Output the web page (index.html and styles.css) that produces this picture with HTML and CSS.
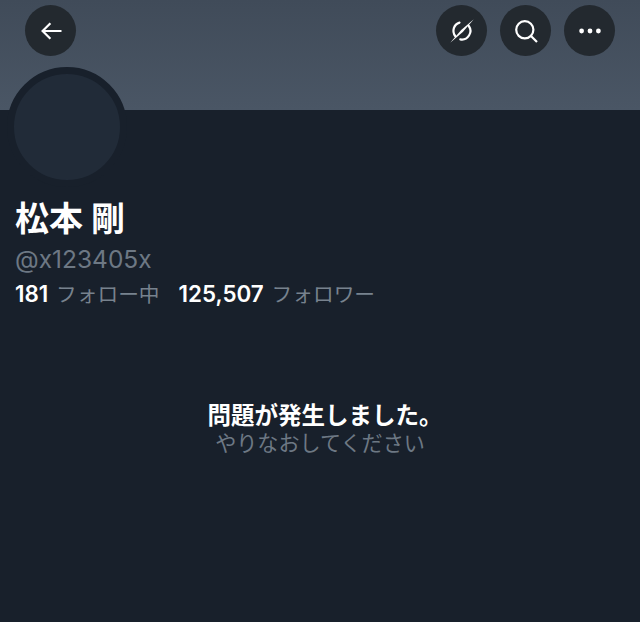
FILE: index.html
```html
<!DOCTYPE html>
<html lang="ja">
<head>
<meta charset="utf-8">
<title>松本 剛</title>
<link rel="stylesheet" href="styles.css">
</head>
<body>
<main class="profile">
  <header class="banner">
    <button class="round" aria-label="戻る">
      <svg viewBox="0 0 24 24" class="icon"><path d="M22.5 12H3.5M11.4 4.2 3.6 12l7.8 7.8" fill="none" stroke="#fff" stroke-width="2.2"/></svg>
    </button>
    <div class="actions">
      <button class="round" aria-label="非表示">
        <svg viewBox="0 0 24 24" class="icon"><path d="M9.5 3.6A8.6 8.6 0 0 0 5.2 17M10.3 20.4A8.6 8.6 0 0 0 18.8 7" fill="none" stroke="#fff" stroke-width="2.2" stroke-linecap="round"/><path d="M23.8.2 11.2 11 .2 23.8 12.8 13Z" fill="#fff"/></svg>
      </button>
      <button class="round" aria-label="検索">
        <svg viewBox="0 0 24 24" class="icon"><circle cx="10.8" cy="10.8" r="8.6" fill="none" stroke="#fff" stroke-width="2.2"/><path d="m17 17 6 6" fill="none" stroke="#fff" stroke-width="2.2"/></svg>
      </button>
      <button class="round" aria-label="その他">
        <svg viewBox="0 0 24 24" class="icon"><circle cx="3.6" cy="12" r="2.4" fill="#fff"/><circle cx="12" cy="12" r="2.4" fill="#fff"/><circle cx="20.4" cy="12" r="2.4" fill="#fff"/></svg>
      </button>
    </div>
  </header>
  <section class="info">
    <div class="avatar"></div>
    <h1 class="name">松本 剛</h1>
    <p class="handle">@x123405x</p>
    <p class="stats">
      <span class="stat"><b>181</b> フォロー中</span>
      <span class="stat"><b>125,507</b> フォロワー</span>
    </p>
  </section>
  <section class="error">
    <p class="error-title">問題が発生しました。</p>
    <p class="error-sub">やりなおしてください</p>
  </section>
</main>
</body>
</html>
```
FILE: styles.css
```css
* { box-sizing: border-box; }
html, body { margin: 0; height: 100%; }
body {
  background: #18202b;
  color: #fff;
  font-family: Inter, "Noto Sans CJK JP", sans-serif;
  overflow: hidden;
}
p, h1 { margin: 0; }
.profile { width: 640px; height: 622px; display: flex; flex-direction: column; }
.banner {
  height: 110px;
  flex: none;
  padding: 5px 25px 0;
  display: flex;
  justify-content: space-between;
  align-items: flex-start;
  background: linear-gradient(#404b59, #4a5665);
}
.actions { display: flex; gap: 13px; }
.round {
  width: 51px;
  height: 51px;
  padding: 0;
  border: 0;
  border-radius: 50%;
  background: #23292f;
  display: flex;
  align-items: center;
  justify-content: center;
}
.icon { width: 24px; height: 24px; display: block; }
.info { padding: 0 15px; }
.avatar {
  width: 120px;
  height: 120px;
  margin: -43px 0 0 -8px;
  border-radius: 50%;
  border: 7px solid #18202b;
  background: #212b38;
}
.name { margin-top: 10px; font-size: 34px; line-height: 44px; font-weight: 700; }
.handle { margin-top: 3px; font-size: 24.5px; line-height: 30px; color: #6d7884; }
.stats { margin-top: 6px; display: flex; gap: 19px; align-items: baseline; font-size: 20.7px; line-height: 28px; color: #77828e; }
.stats b { margin-right: 2px; color: #fff; font-size: 22.4px; font-weight: 600; }
.error { margin-top: 92px; text-align: center; }
.error-title { padding-left: 10px; font-size: 23.5px; line-height: 30px; font-weight: 700; }
.error-sub { font-size: 21.1px; line-height: 26px; color: #6d7884; }
```
